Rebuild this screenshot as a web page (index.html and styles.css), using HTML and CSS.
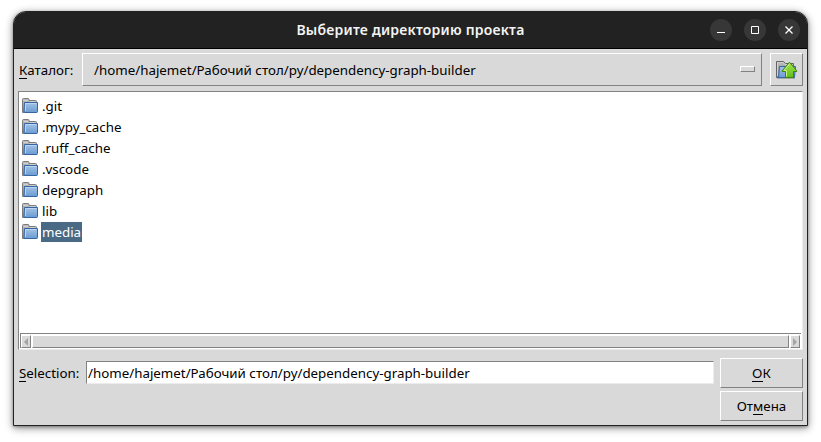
FILE: index.html
```html
<!DOCTYPE html>
<html lang="ru">
<head>
<meta charset="utf-8">
<title>Выберите директорию проекта</title>
<link rel="stylesheet" href="styles.css">
</head>
<body>
<svg class="defs" width="0" height="0" aria-hidden="true">
  <defs>
    <linearGradient id="blue" x1="0" y1="0" x2="0" y2="1"><stop offset="0" stop-color="#a4c3e7"/><stop offset="1" stop-color="#6a9bd2"/></linearGradient>
    <linearGradient id="gray" x1="0" y1="0" x2="0" y2="1"><stop offset="0" stop-color="#bdbdbd"/><stop offset="1" stop-color="#8f8f8f"/></linearGradient>
    <linearGradient id="green" x1="0" y1="0" x2="0" y2="1"><stop offset="0" stop-color="#a6e34e"/><stop offset="1" stop-color="#5fbf16"/></linearGradient>
    <symbol id="folder" viewBox="0 0 16 16">
      <path d="M.5 14.5V1.5Q.5.5 1.5.5H6Q7 .5 7 1.5V2.5H13.5Q14.5 2.5 14.5 3.5V14.5Z" fill="url(#gray)" stroke="#7c7c7c"/>
      <path d="M1.5 2.5H6M7.5 3.5H13.5" stroke="#d0d0d0" fill="none"/>
      <path d="M2.5 4.5H15.5V13.5Q15.5 14.5 14.5 14.5H3Q2 14.5 2 13.5Z" fill="url(#blue)" stroke="#3465a4"/>
      <path d="M3.5 13V5.5H14.5" stroke="#bdd4ee" fill="none"/>
    </symbol>
  </defs>
</svg>
<main class="window">
  <header class="titlebar">
    <h1>Выберите директорию проекта</h1>
    <div class="controls">
      <span class="control"><svg width="22" height="22"><path d="M7 13.5H15" stroke="#fff"/></svg></span>
      <span class="control"><svg width="22" height="22"><path d="M7.5 7.5H14.5V14.5H7.5Z" fill="none" stroke="#fff"/></svg></span>
      <span class="control"><svg width="22" height="22"><path d="M7.5 7.5L14.5 14.5M14.5 7.5L7.5 14.5" fill="none" stroke="#fff" stroke-width="1.3"/></svg></span>
    </div>
  </header>
  <div class="content">
    <div class="row path-row">
      <label class="label path-label"><u>К</u>аталог:</label>
      <div class="raised menu"><span>/home/hajemet/Рабочий стол/py/dependency-graph-builder</span><i class="raised indicator"></i></div>
      <div class="raised up">
        <svg width="22" height="20" viewBox="0 0 22 20">
          <path d="M.5 17.5V1.5H7.5L9.5 3.5H17.5V17.5Z" fill="url(#gray)" stroke="#646464"/>
          <path d="M1.5 16V2.5H7L9 4.5H16.5" fill="none" stroke="#d0d0d0"/>
          <path d="M3.5 6.5H19.5L18.5 17.5H2.5Z" fill="url(#blue)" stroke="#3465a4"/>
          <path d="M1 18.5H19" stroke="#777" stroke-opacity=".5"/>
          <path d="M13.5 2.2L20.8 10.8V11.5H17.5V17.5H9.5V11.5H6.2V10.8Z" fill="url(#green)" stroke="#3c8707"/>
          <path d="M13.5 4L8 10.5H10.5V16.5" fill="none" stroke="#c8f28a"/>
        </svg>
      </div>
    </div>
    <div class="list">
      <ul>
        <li><svg class="icon"><use href="#folder"/></svg><span>.git</span></li>
        <li><svg class="icon"><use href="#folder"/></svg><span>.mypy_cache</span></li>
        <li><svg class="icon"><use href="#folder"/></svg><span>.ruff_cache</span></li>
        <li><svg class="icon"><use href="#folder"/></svg><span>.vscode</span></li>
        <li><svg class="icon"><use href="#folder"/></svg><span>depgraph</span></li>
        <li><svg class="icon"><use href="#folder"/></svg><span>lib</span></li>
        <li><svg class="icon"><use href="#folder"/></svg><span class="selected">media</span></li>
      </ul>
      <div class="scrollbar">
        <div class="raised arrow"><svg width="8" height="10"><path d="M6 1V9L2 5Z" fill="#a3a3a3"/></svg></div>
        <div class="raised thumb"></div>
        <div class="raised arrow"><svg width="8" height="10"><path d="M2 1V9L6 5Z" fill="#a3a3a3"/></svg></div>
      </div>
    </div>
    <div class="row bottom">
      <label class="label selection-label"><u>S</u>election:</label>
      <div class="entry">/home/hajemet/Рабочий стол/py/dependency-graph-builder</div>
      <div class="buttons">
        <div class="raised button"><span><u>O</u>К</span></div>
        <div class="raised button"><span>От<u>м</u>ена</span></div>
      </div>
    </div>
  </div>
</main>
</body>
</html>
```

FILE: styles.css
```css
* { box-sizing: border-box; }
body {
  margin: 0;
  padding: 11px 13px 16px;
  height: 442px;
  overflow: hidden;
  background: #fff;
  color: #000;
  font: 13.333px/18px "Noto Sans", sans-serif;
}
.defs { position: absolute; }
u { text-decoration: none; border-bottom: 1px solid #000; display: inline-block; line-height: 15px; }
.window {
  width: 795px;
  height: 415px;
  border: 1px solid #222;
  border-radius: 13px 13px 0 0;
  background: #d9d9d9;
  overflow: hidden;
  box-shadow: 0 2px 8px rgba(0, 0, 0, .45), 0 1px 3px rgba(0, 0, 0, .3);
}
.titlebar {
  display: grid;
  grid-template-columns: 1fr auto 1fr;
  align-items: center;
  height: 37px;
  background: #222;
  border-bottom: 1px solid #000;
  color: #f4f4f4;
}
.titlebar h1 {
  grid-column: 2;
  margin: 0;
  font: 600 14px/20px "Noto Sans", sans-serif;
  letter-spacing: .22px;
}
.controls { display: flex; justify-content: flex-end; gap: 12px; padding-right: 7px; }
.control { width: 22px; height: 22px; border-radius: 50%; background: #373737; }
.control svg { display: block; }
.content { padding: 4px 4px 0; }
.row { display: flex; }
.raised {
  background: #d9d9d9;
  border: 1px solid;
  border-color: #fff #828282 #828282 #fff;
}
.path-row { height: 33px; }
.label { padding-left: 1px; }
.path-label { width: 64px; padding-top: 8px; }
.menu {
  width: 680px;
  margin-right: 8px;
  padding: 0 6px 0 11px;
  display: flex;
  align-items: center;
  justify-content: space-between;
}
.indicator { width: 15px; height: 6px; margin-top: -1px; }
.up { width: 33px; display: grid; place-items: center; }
.up svg { display: block; }
.list {
  display: flex;
  flex-direction: column;
  justify-content: space-between;
  height: 259px;
  margin-top: 5px;
  padding: 1px;
  background: #fff;
  border: 1px solid;
  border-color: #828282 #ececec #ececec #828282;
}
.list ul { list-style: none; margin: 0; padding: 2px 0 0 2px; }
.list li { display: flex; align-items: center; height: 21px; }
.icon { width: 16px; height: 16px; margin-right: 3px; }
.list li span { height: 20px; line-height: 20px; padding: 0 1px; }
.list li .selected { background: #4a6984; color: #fff; }
.scrollbar {
  display: flex;
  gap: 1px;
  height: 15px;
  padding: 1px 1px 0 0;
  border-top: 1px solid #828282;
  border-left: 1px solid #828282;
}
.arrow { width: 10px; height: 13px; display: grid; place-items: center; }
.thumb { flex: 1; height: 13px; }
.bottom { margin-top: 8px; }
.selection-label { width: 68px; padding-top: 6px; }
.entry {
  width: 628px;
  height: 23px;
  margin: 3px 6px 0 0;
  padding: 0 1px;
  line-height: 22px;
  background: #fff;
  border: 1px solid;
  border-color: #828282 #ececec #ececec #828282;
}
.buttons { display: flex; flex-direction: column; gap: 3px; width: 83px; }
.button { height: 30px; display: flex; align-items: center; justify-content: center; }
```
